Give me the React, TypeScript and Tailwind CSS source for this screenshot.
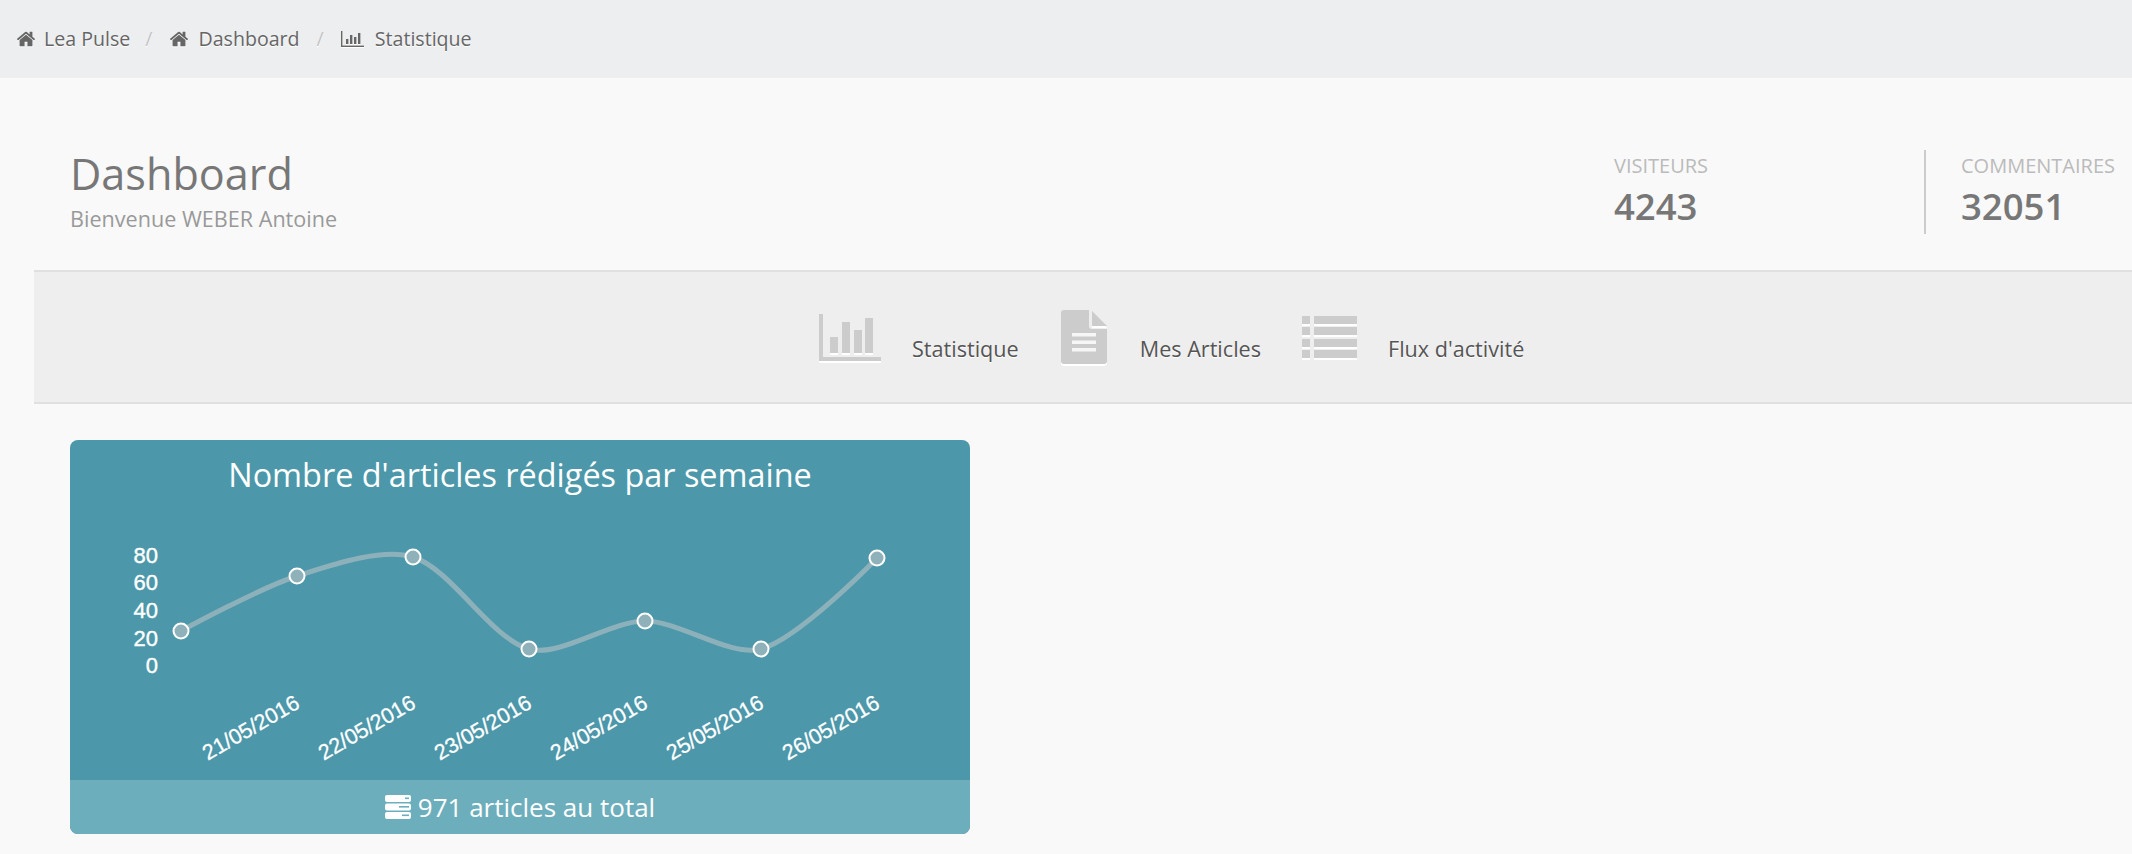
import React from "react";

const HOME =
  "M1472 992v480q0 26-19 45t-45 19h-384v-384h-256v384h-384q-26 0-45-19t-19-45v-480q0-1 .5-3t.5-3l575-474 575 474q1 2 1 6zm223-69l-62 74q-8 9-21 11h-3q-13 0-21-7l-692-577-692 577q-12 8-24 7-13-2-21-11l-62-74q-8-10-7-23.5t11-21.5l719-599q32-26 76-26t76 26l244 204v-195q0-14 9-23t23-9h192q14 0 23 9t9 23v408l219 182q10 8 11 21.5t-7 23.5z";

function HomeIcon() {
  return (
    <svg viewBox="0 0 1792 1792" className="w-[20px] h-[20px] shrink-0 drop-shadow-[0_1px_0_#fff]" fill="#666">
      <path d={HOME} />
    </svg>
  );
}

function SmallChart() {
  return (
    <svg width="23" height="16" viewBox="0 0 23 16" className="shrink-0 drop-shadow-[0_1px_0_#fff]" fill="#666">
      <rect x="0" y="0" width="1.4" height="16" />
      <rect x="0" y="14.6" width="23" height="1.4" />
      <rect x="5" y="8" width="2.4" height="5" />
      <rect x="9" y="4" width="2.4" height="9" />
      <rect x="13" y="6" width="2.4" height="7" />
      <rect x="17" y="2" width="2.4" height="11" />
    </svg>
  );
}

function BigChart() {
  return (
    <svg width="62" height="47" viewBox="0 0 62 47" className="shrink-0 drop-shadow-[0_2px_0_#fff]" fill="#cccccc">
      <rect x="0" y="0" width="4" height="47" />
      <rect x="0" y="43" width="62" height="4" />
      <rect x="11" y="23" width="8" height="16" />
      <rect x="23" y="8" width="8" height="31" />
      <rect x="35" y="16" width="8" height="23" />
      <rect x="46" y="4" width="8" height="35" />
    </svg>
  );
}

function BigFile() {
  return (
    <svg width="46" height="54" viewBox="0 0 46 54" className="block shrink-0 drop-shadow-[0_2px_0_#fff]" fill="#cccccc">
      <path d="M3 0H28V16a3 3 0 0 0 3 3H46V51a3 3 0 0 1-3 3H3a3 3 0 0 1-3-3V3a3 3 0 0 1 3-3z" />
      <path d="M31 1L46 16H31z" />
      <rect x="11" y="23" width="24" height="3.5" fill="#f6f6f6" />
      <rect x="11" y="30.5" width="24" height="3.5" fill="#f6f6f6" />
      <rect x="11" y="38" width="24" height="3.5" fill="#f6f6f6" />
    </svg>
  );
}

function BigList() {
  const rows = [0, 11, 23, 34];
  return (
    <svg width="55" height="42" viewBox="0 0 55 42" className="block shrink-0 drop-shadow-[0_2px_0_#fff]" fill="#cccccc">
      {rows.map((y) => (
        <g key={y}>
          <rect x="0" y={y} width="8" height="8" />
          <rect x="12" y={y} width="43" height="8" />
        </g>
      ))}
    </svg>
  );
}

function Server() {
  const ys = [0, 8.5, 17];
  return (
    <svg width="26" height="24" viewBox="0 0 26 24" className="shrink-0">
      {ys.map((y) => (
        <g key={y}>
          <rect x="0" y={y} width="26" height="7" rx="2" fill="#fff" />
          <rect x={y === 0 ? 20 : y === 8.5 ? 14 : 17} y={y + 2.5} width={y === 0 ? 4 : y === 8.5 ? 10 : 7} height="1.6" fill="#6caebc" />
        </g>
      ))}
    </svg>
  );
}

const pts: [number, number][] = [
  [111, 126],
  [227, 71],
  [343, 52],
  [459, 144],
  [575, 116],
  [691, 144],
  [807, 53],
];

function spline(p: [number, number][], t = 0.3) {
  let d = `M${p[0][0]} ${p[0][1]}`;
  const ctrl = (a: [number, number], b: [number, number], c: [number, number]) => {
    const d1 = Math.hypot(b[0] - a[0], b[1] - a[1]);
    const d2 = Math.hypot(c[0] - b[0], c[1] - b[1]);
    const fa = (t * d1) / (d1 + d2);
    const fb = (t * d2) / (d1 + d2);
    return {
      prev: [b[0] - fa * (c[0] - a[0]), b[1] - fa * (c[1] - a[1])],
      next: [b[0] + fb * (c[0] - a[0]), b[1] + fb * (c[1] - a[1])],
    };
  };
  for (let i = 0; i < p.length - 1; i++) {
    const c1 = i === 0 ? { next: p[0] } : ctrl(p[i - 1], p[i], p[i + 1]);
    const c2 = i === p.length - 2 ? { prev: p[i + 1] } : ctrl(p[i], p[i + 1], p[i + 2]);
    d += `C${c1.next[0]} ${c1.next[1]} ${c2.prev[0]} ${c2.prev[1]} ${p[i + 1][0]} ${p[i + 1][1]}`;
  }
  return d;
}

const dates = ["21/05/2016", "22/05/2016", "23/05/2016", "24/05/2016", "25/05/2016", "26/05/2016"];
const ticks: [string, number][] = [
  ["80", 50],
  ["60", 77],
  ["40", 105],
  ["20", 133],
  ["0", 160],
];

function Chart() {
  return (
    <svg width="900" height="275" viewBox="0 0 900 275" className="block" fontFamily="'Liberation Sans', Arial, sans-serif" fill="#fff">
      {ticks.map(([l, y]) => (
        <text key={l} x="88" y={y} dy="8" textAnchor="end" fontSize="22" stroke="#fff" strokeWidth="0.4">
          {l}
        </text>
      ))}
      <path d={spline(pts)} fill="none" stroke="#8db1ba" strokeWidth="5" />
      {pts.map(([x, y]) => (
        <circle key={x} cx={x} cy={y} r="7.5" fill="#8fb2ba" stroke="#fff" strokeWidth="2" />
      ))}
      {dates.map((d, i) => (
        <text key={d} transform={`translate(${231 + i * 116} 202) rotate(-30)`} textAnchor="end" fontSize="21.5" stroke="#fff" strokeWidth="0.3">
          {d}
        </text>
      ))}
    </svg>
  );
}

export default function App() {
  return (
    <div className="w-[2132px] h-[854px] overflow-hidden bg-[#f9f9f9] font-['Open_Sans',sans-serif]">
      <div className="h-[78px] bg-[#edeef0] flex items-center pl-[16px] text-[19.6px] text-[#666] [text-shadow:0_1px_0_#fff]">
        <HomeIcon />
        <span className="ml-[8px]">Lea Pulse</span>
        <span className="text-[#c4c4c4] ml-[15px] mr-[17px]">/</span>
        <HomeIcon />
        <span className="ml-[9px]">Dashboard</span>
        <span className="text-[#c4c4c4] ml-[17px] mr-[17px]">/</span>
        <SmallChart />
        <span className="ml-[11px]">Statistique</span>
      </div>

      <div className="pl-[34px]">
        <div className="h-[192px] flex items-start justify-between pl-[36px]">
          <div className="pt-[67px]">
            <div className="text-[43.2px] leading-[58px] text-[#777]">Dashboard</div>
            <div className="text-[21.6px] leading-[32px] text-[#999]">Bienvenue WEBER Antoine</div>
          </div>
          <div className="flex pt-[72px] w-[518px]">
            <div className="w-[310px] pt-px">
              <div className="text-[20px] leading-[30px] text-[#bbb]">VISITEURS</div>
              <div className="text-[36.5px] leading-[50px] font-semibold text-[#777]">4243</div>
            </div>
            <div className="border-l-2 border-[#ccc] pl-[35px] h-[84px] pt-px">
              <div className="text-[20px] leading-[30px] text-[#bbb]">COMMENTAIRES</div>
              <div className="text-[36.5px] leading-[50px] font-semibold text-[#777]">32051</div>
            </div>
          </div>
        </div>

        <div className="h-[134px] bg-[#eee] border-y-2 border-[#e0e0e0] flex items-center pl-[785px] text-[21.6px] text-[#555] [text-shadow:0_1px_0_#fff]">
          <BigChart />
          <span className="ml-[31px] mt-[24px]">Statistique</span>
          <span className="ml-[42px]"><BigFile /></span>
          <span className="ml-[33px] mt-[24px]">Mes Articles</span>
          <span className="ml-[41px]"><BigList /></span>
          <span className="ml-[31px] mt-[24px]">Flux d'activité</span>
        </div>

        <div className="ml-[36px] mt-[36px] w-[900px] h-[394px] rounded-[8px] overflow-hidden bg-[#4c97a9] flex flex-col">
          <div className="h-[65px] text-center text-[32.4px] leading-[68px] text-white">Nombre d'articles rédigés par semaine</div>
          <Chart />
          <div className="h-[54px] bg-[#6caebc] flex items-center justify-center gap-[7px] text-[26px] text-white">
            <Server />
            <span>971 articles au total</span>
          </div>
        </div>
      </div>
    </div>
  );
}
